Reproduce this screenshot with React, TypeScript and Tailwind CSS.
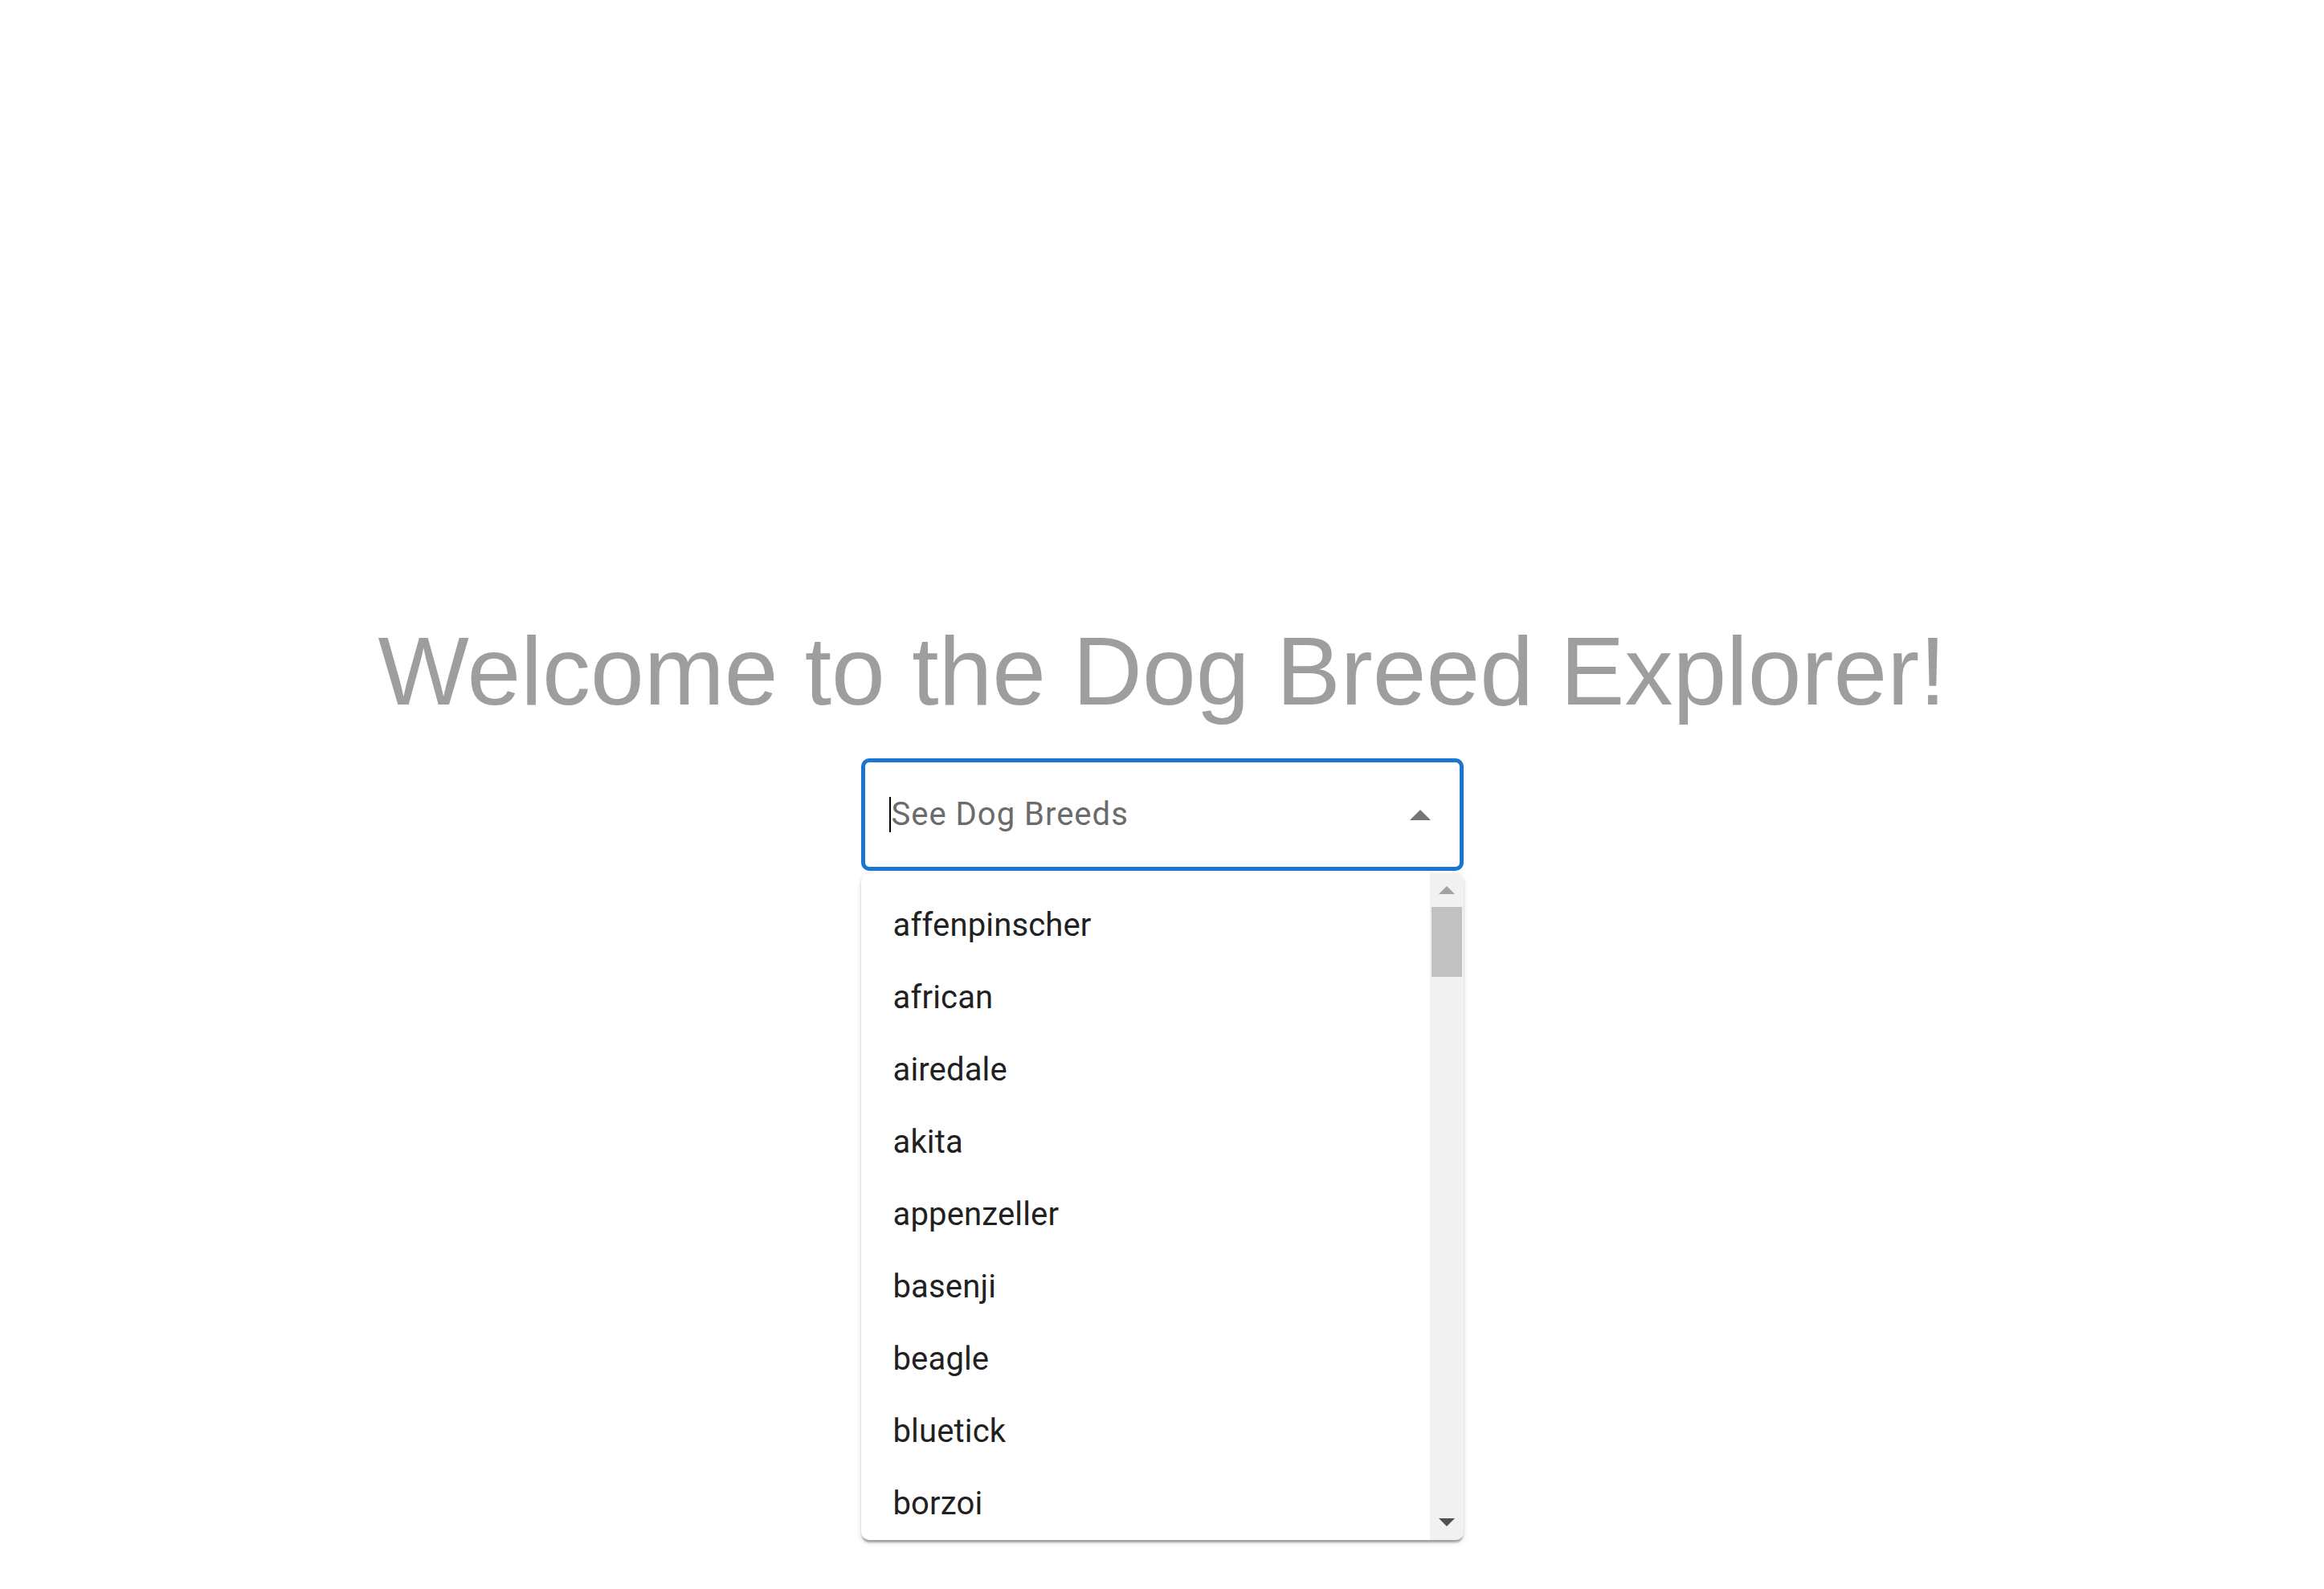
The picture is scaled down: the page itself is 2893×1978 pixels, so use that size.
const breeds = [
  "affenpinscher",
  "african",
  "airedale",
  "akita",
  "appenzeller",
  "basenji",
  "beagle",
  "bluetick",
  "borzoi",
];

const BreedSelect = () => {
  return (
    <div className="w-[750px] mt-[49px]">
      {/* input */}
      <div className="h-[140px] rounded-[10px] border-[5px] border-[#1976d2] flex items-center pl-[30px] pr-[36px]">
        <span className="w-[2px] h-[44px] bg-black" />
        <span className="flex-1 pl-[1px] text-[40px] leading-[60px] tracking-[1px] text-[#6b6b6b] font-['Roboto',sans-serif]">
          See Dog Breeds
        </span>
        <svg width="26" height="13" viewBox="0 0 10 5" className="fill-[#757575]">
          <path d="M0 5l5-5 5 5z" />
        </svg>
      </div>

      {/* popup */}
      <div className="mt-[3px] h-[830px] bg-white rounded-[10px] overflow-hidden flex shadow-[0_5px_2.5px_-2.5px_rgba(0,0,0,0.2),0_2.5px_2.5px_0_rgba(0,0,0,0.14),0_2.5px_7.5px_0_rgba(0,0,0,0.12)]">
        <ul className="flex-1 overflow-hidden pt-[20px]">
          {breeds.map((b) => (
            <li
              key={b}
              className="h-[90px] px-[40px] py-[15px] text-[40px] leading-[60px] tracking-[0.15px] text-[#212121] font-['Roboto',sans-serif]"
            >
              {b}
            </li>
          ))}
        </ul>
        <div className="w-[42px] bg-[#f1f1f1] flex flex-col">
          <div className="h-[42px] flex items-center justify-center">
            <svg width="20" height="10" viewBox="0 0 10 5" className="fill-[#a3a3a3]">
              <path d="M0 5l5-5 5 5z" />
            </svg>
          </div>
          <div className="mx-[2px] h-[87px] bg-[#c1c1c1]" />
          <div className="flex-1" />
          <div className="h-[44px] flex items-center justify-center">
            <svg width="20" height="10" viewBox="0 0 10 5" className="fill-[#505050]">
              <path d="M0 0l5 5 5-5z" />
            </svg>
          </div>
        </div>
      </div>
    </div>
  );
};

export default function App() {
  return (
    <div className="min-h-screen bg-white flex flex-col items-center pt-[775px]">
      <h1 className="text-[120px] leading-[120px] text-[#9e9e9e] font-['Liberation_Sans',Arial,sans-serif]">
        Welcome to the Dog Breed Explorer!
      </h1>
      <BreedSelect />
    </div>
  );
}
